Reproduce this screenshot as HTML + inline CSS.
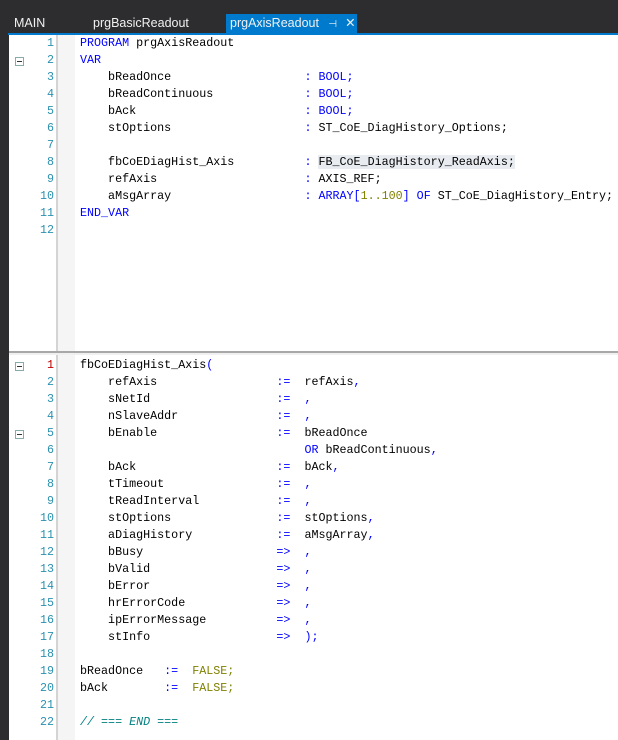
<!DOCTYPE html>
<html><head><meta charset="utf-8"><style>
body{margin:0;width:618px;height:740px;background:#2d2d30;position:relative;overflow:hidden;font-family:"Liberation Sans",sans-serif}
.tab{position:absolute;top:14px;height:19px;color:#f1f1f1;font-size:12.5px;line-height:19px}
.bar{position:absolute;left:8px;right:0;top:33px;height:2px;background:#007acc}
.pane{position:absolute;left:9px;right:0;background:#fff}
.gut{position:absolute;left:0;top:0;bottom:0;width:47px;border-right:2px solid #d4d4d4}
.strip{position:absolute;left:49px;top:0;bottom:0;width:17px;background:#f5f5f5}
.lines{position:absolute;left:0;top:0;font-family:"Liberation Mono",monospace;font-size:11.7px;line-height:17px;white-space:pre}
.ln{position:absolute;left:0;width:45px;text-align:right;color:#2b91af;font-family:"Liberation Mono",monospace;font-size:11.7px;line-height:17px;white-space:pre}
.code{position:absolute;left:71px;color:#000}
.k{color:#0000ff}.n{color:#808000}.c{color:#008080;font-style:italic}
.box{position:absolute;left:6px;width:7px;height:7px;border:1px solid #8aa;background:#fff}
.box:after{content:"";position:absolute;left:1px;top:3px;width:5px;height:1px;background:#333}
.hl{background:#e8ebf0}
</style></head><body>
<div class="tab" style="left:14px">MAIN</div>
<div class="tab" style="left:93px">prgBasicReadout</div>
<div class="tab" style="left:226px;width:131px;background:#007acc;padding-left:4px;box-sizing:border-box">prgAxisReadout <span style="font-size:10px;margin-left:6px">⊣</span><span style="margin-left:8px">✕</span></div>
<div class="bar"></div>

<div class="pane" style="top:35px;height:316px">
<div class="gut"></div><div class="strip"></div>
<div class="box" style="top:22px"></div>
<div class="ln" style="top:0">1
2
3
4
5
6
7
8
9
10
11
12</div>
<div class="lines code" style="top:0"><span class="k">PROGRAM</span> prgAxisReadout
<span class="k">VAR</span>
    bReadOnce                   <span class="k">:</span> <span class="k">BOOL;</span>
    bReadContinuous             <span class="k">:</span> <span class="k">BOOL;</span>
    bAck                        <span class="k">:</span> <span class="k">BOOL;</span>
    stOptions                   <span class="k">:</span> ST_CoE_DiagHistory_Options;

    fbCoEDiagHist_Axis          <span class="k">:</span> <span class="hl">FB_CoE_DiagHistory_ReadAxis;</span>
    refAxis                     <span class="k">:</span> AXIS_REF;
    aMsgArray                   <span class="k">:</span> <span class="k">ARRAY[</span><span class="n">1..100</span><span class="k">] OF</span> ST_CoE_DiagHistory_Entry;
<span class="k">END_VAR</span>
</div>
</div>
<div style="position:absolute;left:9px;right:0;top:351px;height:4px;background:#f0f0f0;border-top:2px solid #a8a8a8;box-sizing:border-box"></div>

<div class="pane" style="top:355px;height:385px">
<div class="gut"></div><div class="strip"></div>
<div class="box" style="top:7px"></div>
<div class="box" style="top:75px"></div>
<div class="ln" style="top:2px"><span style="color:#c00000">1</span>
2
3
4
5
6
7
8
9
10
11
12
13
14
15
16
17
18
19
20
21
22</div>
<div class="lines code" style="top:2px">fbCoEDiagHist_Axis<span class="k">(</span>
    refAxis                 <span class="k">:=</span>  refAxis<span class="k">,</span>
    sNetId                  <span class="k">:=</span>  <span class="k">,</span>
    nSlaveAddr              <span class="k">:=</span>  <span class="k">,</span>
    bEnable                 <span class="k">:=</span>  bReadOnce
                                <span class="k">OR</span> bReadContinuous<span class="k">,</span>
    bAck                    <span class="k">:=</span>  bAck<span class="k">,</span>
    tTimeout                <span class="k">:=</span>  <span class="k">,</span>
    tReadInterval           <span class="k">:=</span>  <span class="k">,</span>
    stOptions               <span class="k">:=</span>  stOptions<span class="k">,</span>
    aDiagHistory            <span class="k">:=</span>  aMsgArray<span class="k">,</span>
    bBusy                   <span class="k">=&gt;</span>  <span class="k">,</span>
    bValid                  <span class="k">=&gt;</span>  <span class="k">,</span>
    bError                  <span class="k">=&gt;</span>  <span class="k">,</span>
    hrErrorCode             <span class="k">=&gt;</span>  <span class="k">,</span>
    ipErrorMessage          <span class="k">=&gt;</span>  <span class="k">,</span>
    stInfo                  <span class="k">=&gt;</span>  <span class="k">);</span>

bReadOnce   <span class="k">:=</span>  <span class="n">FALSE;</span>
bAck        <span class="k">:=</span>  <span class="n">FALSE;</span>

<span class="c">// === END ===</span>
</div>
</div>
</body></html>
